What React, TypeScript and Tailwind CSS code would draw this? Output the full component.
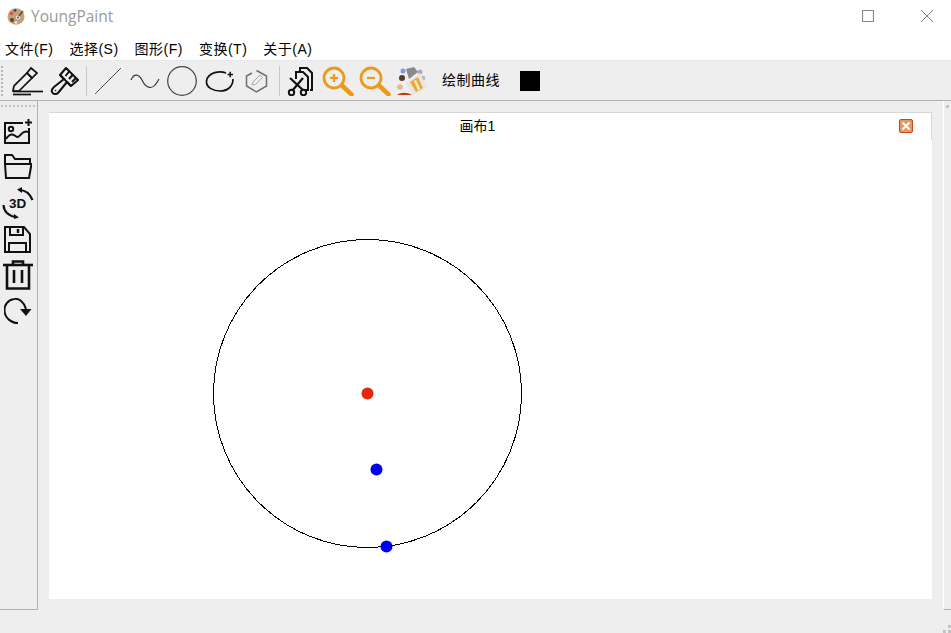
const menus = ['文件(F)', '选择(S)', '图形(F)', '变换(T)', '关于(A)'];

function Logo() {
  return (
    <svg width="18" height="18" viewBox="0 0 18 18">
      <ellipse cx="9" cy="9.5" rx="8.5" ry="8.3" fill="#c2a07a" />
      <circle cx="4.5" cy="6.5" r="1.7" fill="#d9532c" />
      <circle cx="8" cy="3.5" r="1.4" fill="#2b46b8" />
      <circle cx="11" cy="10.5" r="2" fill="#f4f4f8" />
      <circle cx="11" cy="10.5" r="1" fill="#2b46b8" />
      <circle cx="5" cy="13" r="2" fill="#55463a" />
      <circle cx="9" cy="15.5" r="1.2" fill="#f3efe6" />
      <path d="M12 9 L16 4" stroke="#6b4a2b" strokeWidth="1.6" />
    </svg>
  );
}

function Pencil() {
  return (
    <svg width="32" height="30" viewBox="0 0 32 30" fill="none" stroke="#111" strokeWidth="1.7">
      <path d="M2 25 L3 20 L16 7 L21 12 L8 25 Z" />
      <path d="M20 2 L26 7 L21 12 L16 7 Z" />
      <path d="M2 25.5 H32" />
      <path d="M2 28.5 H20" />
    </svg>
  );
}

function Brush() {
  return (
    <svg width="30" height="30" viewBox="0 0 30 30" fill="none" stroke="#111" strokeWidth="2" strokeLinejoin="round">
      <path d="M16 2 L28 14 L21 20 L17 16 L8 27 C6 29 3 28 2 26 C1 24 2 23 4 21 L14 13 L10 9 Z" />
      <path d="M10 9 L21 20" />
      <path d="M19.5 5 L15.5 10 M23 8.5 L19 13 M26 12 L22 16" />
      <circle cx="5.5" cy="24.5" r="0.8" fill="#111" stroke="none" />
    </svg>
  );
}

function LineIcon() {
  return (
    <svg width="28" height="28" viewBox="0 0 28 28" fill="none" stroke="#555" strokeWidth="1">
      <path d="M1 27 L27 1" />
    </svg>
  );
}

function Curve() {
  return (
    <svg width="30" height="16" viewBox="0 0 30 16" fill="none" stroke="#333" strokeWidth="1.1">
      <path d="M1 7 C4 0 9 1 12 7 C15 14 21 17 25 12 C27 10 28 8 29 6" />
    </svg>
  );
}

function CircleIcon() {
  return (
    <svg width="30" height="30" viewBox="0 0 30 30" fill="none" stroke="#444" strokeWidth="1.2">
      <circle cx="15" cy="15" r="14.3" />
    </svg>
  );
}

function CirclePlus() {
  return (
    <svg width="30" height="24" viewBox="0 0 30 24" fill="none" stroke="#111" strokeWidth="1.7">
      <path d="M21 4 C15 1.5 3 3 1.5 12 C1 19 9 22 15 22 C22 22 28 18 28 10" />
      <path d="M22.5 5.5 H28 M25.2 2.8 V8.2" strokeWidth="1.5" />
    </svg>
  );
}

function HexPencil() {
  return (
    <svg width="23" height="24" viewBox="0 0 23 24" fill="none">
      <path d="M11.5 1.5 L21.5 7 V17 L11.5 23 L1.5 17 V7 L7 4" stroke="#707070" strokeWidth="1.5" />
      <path d="M7 16 L8 13 L15 6 L17.5 8.5 L10.5 15.5 Z" stroke="#a8a8a8" strokeWidth="1" />
    </svg>
  );
}

function CutCopy() {
  return (
    <svg width="26" height="30" viewBox="0 0 26 30" fill="none" stroke="#111" strokeWidth="2">
      <path d="M9 13 V6 H16 L21 11 V24 H18" />
      <path d="M13 5 V2 H20 L25 7 V24 H23" />
      <path d="M3 12 L17 25" strokeWidth="2.2" />
      <path d="M16 12 L5 25" strokeWidth="2.2" />
      <circle cx="4.5" cy="26.5" r="2.7" fill="#eeeeee" strokeWidth="2" />
      <circle cx="16.5" cy="26.5" r="2.7" fill="#eeeeee" strokeWidth="2" />
    </svg>
  );
}

function Zoom({ plus }: { plus: boolean }) {
  return (
    <svg width="32" height="30" viewBox="0 0 32 30" fill="none" stroke="#ec9a1c">
      <circle cx="12" cy="12" r="10" strokeWidth="2.8" />
      <path d="M20 19.5 L29.5 28.5" strokeWidth="4.5" strokeLinecap="round" />
      <path d="M8 12 H16" strokeWidth="2.2" />
      {plus && <path d="M12 8 V16" strokeWidth="2.2" />}
    </svg>
  );
}

function PaintBucket() {
  return (
    <svg width="32" height="30" viewBox="0 0 32 30">
      <circle cx="8" cy="5" r="2.5" fill="#7d9cc9" />
      <circle cx="25" cy="6" r="2.5" fill="#b6a4bf" />
      <circle cx="28" cy="12" r="2.3" fill="#b9b4c4" />
      <circle cx="7" cy="12" r="3" fill="#5a3a2c" />
      <circle cx="5" cy="21" r="2.8" fill="#e8b78a" />
      <path d="M11 3 L19 1 L23 6 L14 13 Z" fill="#8a8a8a" />
      <path d="M10 17 L25 7 L32 22 L18 29 Z" fill="#e8e6e2" />
      <path d="M15 16 L23 11 L28 22 L21 26 Z" fill="#f0a83c" />
      <path d="M19 15 L21 14 L25 23 L23 24 Z" fill="#fbf2de" />
      <path d="M2 29 C6 26 12 26 17 29 Z" fill="#c23a12" />
    </svg>
  );
}

function ImageAdd() {
  return (
    <svg width="28" height="25" viewBox="0 0 28 25" fill="none" stroke="#111" strokeWidth="2">
      <path d="M19 4 H1 V24 H25 V9" />
      <circle cx="7" cy="10" r="2.2" />
      <path d="M2 20 C7 13 10 16 13 18 C16 19 18 10 24 13" />
      <path d="M21 3.5 H28 M24.5 0 V7" />
    </svg>
  );
}

function Folder() {
  return (
    <svg width="28" height="25" viewBox="0 0 28 25" fill="none" stroke="#111" strokeWidth="2">
      <path d="M1 10 V1 H8 L11 5 H26 V10" />
      <path d="M1 10 H27.5 L25 24 H2 L1 10 Z" />
    </svg>
  );
}

function Rotate3D() {
  return (
    <svg width="32" height="32" viewBox="0 0 32 32" fill="none" stroke="#111" strokeWidth="2.2">
      <path d="M17 3 C23 3 28 7 30.5 13" />
      <path d="M15 2.5 L20 0 L20 6 Z" fill="#111" stroke="none" />
      <path d="M1.5 18 C2 25 7 29 14 30" />
      <path d="M17 30.5 L12 27 L12 32 Z" fill="#111" stroke="none" />
      <text x="7" y="21" fontSize="13.5" fontWeight="700" fill="#111" stroke="none" fontFamily="'Liberation Sans', sans-serif">3D</text>
    </svg>
  );
}

function Floppy() {
  return (
    <svg width="27" height="27" viewBox="0 0 27 27" fill="none" stroke="#111" strokeWidth="2">
      <path d="M1 1 H20 L26 8 V26 H1 Z" />
      <path d="M6 1.5 V9 H19 V1.5" />
      <path d="M14 3 V7" strokeWidth="2.5" />
      <path d="M5 26 V17 H22 V26" />
    </svg>
  );
}

function Trash() {
  return (
    <svg width="30" height="30" viewBox="0 0 30 30" fill="none" stroke="#111" strokeWidth="2.6">
      <path d="M0 5 H30" />
      <path d="M10 4 V1.5 H20 V4" />
      <path d="M4 5 V28.5 H26 V5" />
      <path d="M11 10 V23 M19 10 V23" />
    </svg>
  );
}

function Redo() {
  return (
    <svg width="28" height="26" viewBox="0 0 28 26" fill="none" stroke="#111" strokeWidth="2">
      <path d="M22 11 C20 4 15 0 10 1 C4 2 0 7 0.5 13 C1 20 7 25 14 25" />
      <path d="M16 11 H27.5 L22 18 Z" fill="#111" stroke="none" />
    </svg>
  );
}

export default function App() {
  return (
    <div className="w-[951px] h-[633px] flex flex-col overflow-hidden bg-[#eeeeee] font-['Liberation_Sans','Noto_Sans_CJK_SC',sans-serif]">
      {/* title bar */}
      <div className="h-[32px] bg-white flex items-center pl-[7px]">
        <Logo />
        <span className="ml-[6px] mt-[2px] text-[15.5px] text-[#9a9a9a] font-['Open_Sans',sans-serif]">YoungPaint</span>
        <div className="ml-auto flex items-center mr-[18px] gap-[47px]">
          <div className="w-[12px] h-[12px] border border-[#858585]" />
          <svg width="12" height="12" viewBox="0 0 12 12" stroke="#808080" strokeWidth="1">
            <path d="M0 0 L12 12 M12 0 L0 12" />
          </svg>
        </div>
      </div>

      {/* menu bar */}
      <div className="h-[28px] bg-white flex items-center pl-[5px] gap-[16px] pt-[6px] text-[14px] tracking-[0.5px] text-black">
        {menus.map((m) => (
          <span key={m}>{m}</span>
        ))}
      </div>

      {/* toolbar */}
      <div className="h-[41px] border-t border-t-[#e8e8e8] border-b border-b-[#b0b0b0] flex items-center">
        <div className="w-[3px] h-[30px] ml-[1px] border-l-2 border-dotted border-[#b5b5b5]" />
        <div className="ml-[7px]"><Pencil /></div>
        <div className="ml-[7px]"><Brush /></div>
        <div className="w-px h-[30px] bg-[#c8c8c8] ml-[6px]" />
        <div className="ml-[7px]"><LineIcon /></div>
        <div className="ml-[8px]"><Curve /></div>
        <div className="ml-[7px]"><CircleIcon /></div>
        <div className="ml-[8px]"><CirclePlus /></div>
        <div className="ml-[10px]"><HexPencil /></div>
        <div className="w-px h-[30px] bg-[#c8c8c8] ml-[11px]" />
        <div className="ml-[7px]"><CutCopy /></div>
        <div className="ml-[9px]"><Zoom plus /></div>
        <div className="ml-[5px]"><Zoom plus={false} /></div>
        <div className="ml-[4px]"><PaintBucket /></div>
        <span className="ml-[15px] text-[14px] tracking-[0.5px] text-black">绘制曲线</span>
        <div className="ml-[20px] w-[20px] h-[20px] bg-black" />
      </div>

      {/* main area */}
      <div className="h-[509px] flex">
        <div className="w-[38px] pr-[2px] border-r border-b border-[#b0b0b0] flex flex-col items-center">
          <div className="w-[34px] h-[3px] mt-[4px] border-t-2 border-dotted border-[#c0c0c0]" />
          <div className="mt-[11px]"><ImageAdd /></div>
          <div className="mt-[10px]"><Folder /></div>
          <div className="mt-[8px]"><Rotate3D /></div>
          <div className="mt-[7px]"><Floppy /></div>
          <div className="mt-[7px]"><Trash /></div>
          <div className="mt-[8px]"><Redo /></div>
        </div>

        <div className="w-[883px] ml-[11px] mt-[11px] mb-[10px] flex flex-col">
          <div className="h-[28px] bg-white border-t border-r border-[#d8d8d8] flex items-center relative">
            <span className="w-full text-center text-[14px] text-black pr-[25px]">画布1</span>
            <div className="absolute right-[18px] top-[6px] w-[14px] h-[14px] bg-[#e79a5f] border border-[#c8471a] rounded-[2px] flex items-center justify-center">
              <svg width="8" height="8" viewBox="0 0 8 8" stroke="#fff" strokeWidth="2">
                <path d="M0.5 0.5 L7.5 7.5 M7.5 0.5 L0.5 7.5" />
              </svg>
            </div>
          </div>
          <svg className="w-[883px] h-[459px] bg-white" viewBox="0 0 883 459">
            <circle cx="318.5" cy="253.5" r="154" fill="none" stroke="#000" strokeWidth="1" shapeRendering="crispEdges" />
            <circle cx="318.5" cy="253.5" r="6" fill="#e5280c" />
            <circle cx="327.5" cy="329.5" r="6" fill="#0000ee" />
            <circle cx="337.5" cy="406.5" r="6" fill="#0000ee" />
          </svg>
        </div>

        <div className="w-[8px] ml-[11px] h-full border-l border-b border-l-white border-b-[#b0b0b0] pl-[2px] pt-[4px]">
          <div className="w-[3px] h-[3px] bg-[#c4c4c4]" />
        </div>
      </div>

      {/* status bar with size grip */}
      <div className="flex-1 flex justify-end items-end">
        <svg width="8" height="8" viewBox="0 0 8 8" fill="#c4c4c4">
          <rect x="5" y="0" width="3" height="3" />
          <rect x="0" y="5" width="3" height="3" />
          <rect x="5" y="5" width="3" height="3" />
        </svg>
      </div>
    </div>
  );
}
